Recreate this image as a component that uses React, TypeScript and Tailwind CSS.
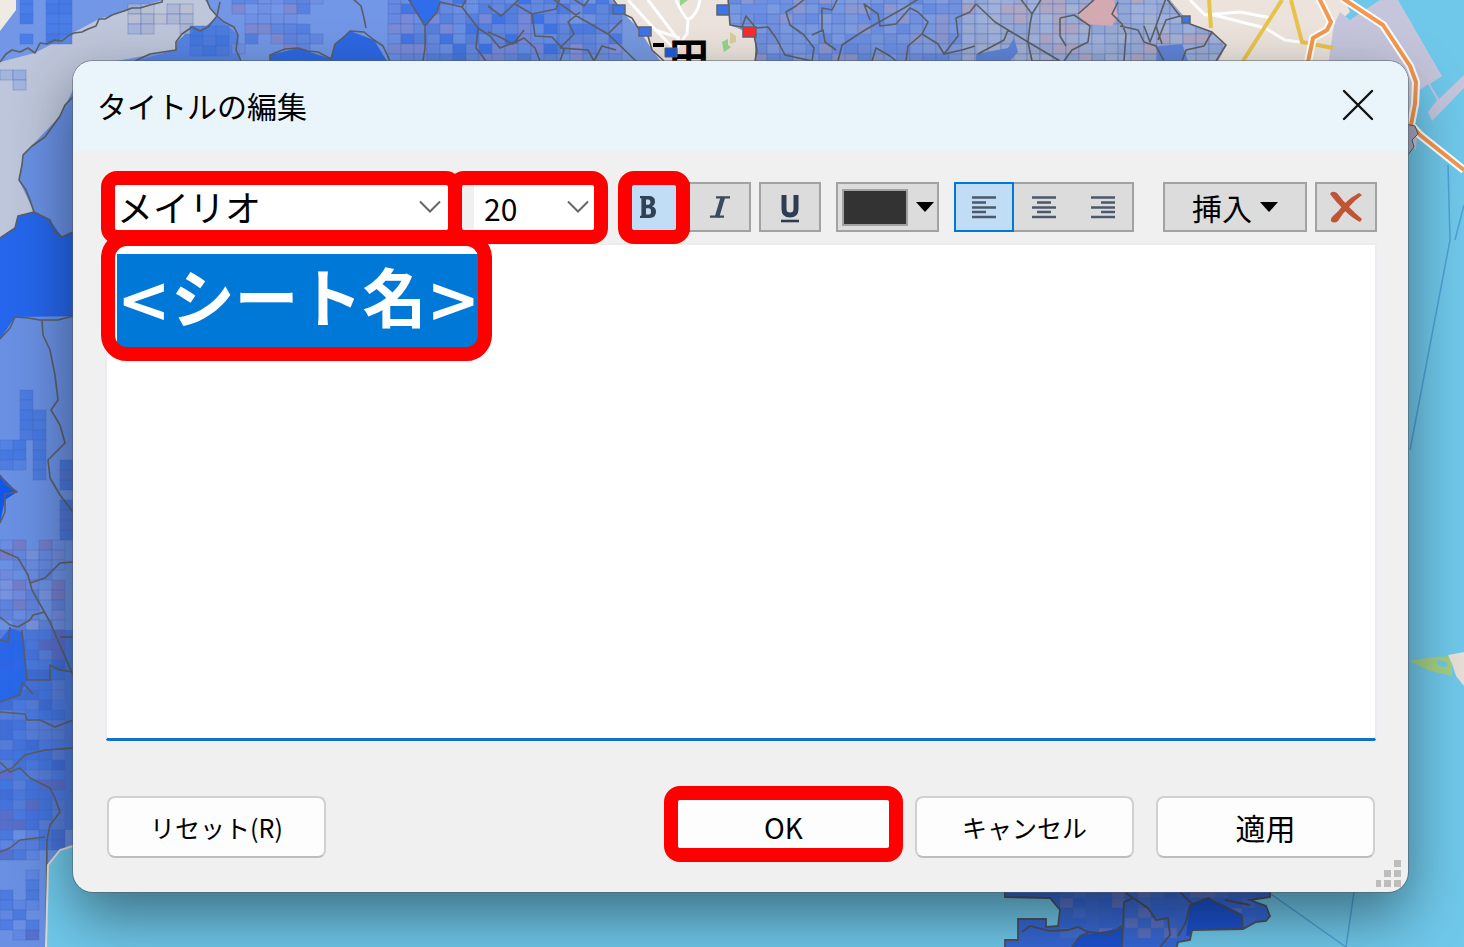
import { useEffect, useRef, useState } from "react";
import { clsx } from "clsx";

type Area = { x: number; y: number; w: number; h: number; colors: string[]; density: number };

// mesh cells laid over the districts
const CELL_W = 13;
const CELL_H = 10;

const TOP_AREAS: Area[] = [
  { x: 20, y: -6, w: 13, h: 50, colors: ["#3f78ea", "#3a72e6"], density: 0.8 },
  { x: 46, y: -6, w: 26, h: 50, colors: ["#3f78ea", "#3a72e6"], density: 0.9 },
  { x: 128, y: 4, w: 65, h: 30, colors: ["#b9bdd0", "#a9b3d2", "#9fb0dc"], density: 0.8 },
  { x: 190, y: 26, w: 40, h: 30, colors: ["#3f74e0", "#4a7be0"], density: 0.9 },
  { x: 232, y: -6, w: 91, h: 60, colors: ["#4f7be0", "#6f90e2", "#5c85e0", "#5a80de", "#7f86cc"], density: 0.75 },
  { x: 388, y: -6, w: 234, h: 70, colors: ["#5a82dc", "#7195e2", "#6c8ddd", "#4274e2", "#6a8cde", "#848fd4"], density: 0.95 },
  { x: 728, y: -6, w: 247, h: 70, colors: ["#668bde", "#7f9ce2", "#88a0dc", "#7390dc", "#7b98de", "#9298cc"], density: 0.95 },
  { x: 962, y: -6, w: 260, h: 70, colors: ["#9badd6", "#a5b1d2", "#8fa5d4", "#9aa8d0", "#b3a5bf", "#a0b2dc"], density: 0.95 },
];

const LEFT_AREAS: Area[] = [
  { x: 0, y: 60, w: 34, h: 30, colors: ["#8ea8de", "#9cb0dc"], density: 0.7 },
  { x: 20, y: 390, w: 13, h: 50, colors: ["#3d74e2", "#4677e0"], density: 1 },
  { x: 33, y: 410, w: 13, h: 70, colors: ["#3d74e2", "#4677e0"], density: 1 },
  { x: 0, y: 440, w: 34, h: 30, colors: ["#3d74e2", "#4a78e0", "#4f7fe2"], density: 0.95 },
  { x: 60, y: 460, w: 13, h: 80, colors: ["#3f70d8", "#486fd0"], density: 0.9 },
  { x: 0, y: 540, w: 73, h: 90, colors: ["#6a8ce0", "#7a94dc", "#5c7fd8", "#6386dc", "#7088da", "#7479c2"], density: 0.9 },
  { x: 0, y: 630, w: 73, h: 220, colors: ["#3f74e0", "#4a7ae0", "#567ed8", "#3c6cd6", "#4472dc", "#5a80da", "#5a6cc6"], density: 0.9 },
  { x: 0, y: 830, w: 44, h: 110, colors: ["#4a78e0", "#5c84e2", "#4674dc", "#5068c8"], density: 0.6 },
];

const ISLAND_AREAS: Area[] = [
  { x: 1060, y: 888, w: 195, h: 59, colors: ["#3d6cd6", "#4672d6", "#3568da", "#3c6ad4", "#6476c4"], density: 0.9 },
];

const BORDERS = [
  "M0 62L6 54L12 50L20 52L28 48L35 53L40 43L47 44L54 40L62 41L68 36L74 33L82 32L88 29L96 26L99 19L105 19L112 15L124 11L132 8L140 8L150 5L162 2L163-2",
  "M135 61L150 54L176 50L176 42L182 34L192 27L200 31L208 27L217 16L210 8L206-2M220 2L217 16L224 22L234 27L238 35L236 50L241 61",
  "M270 61L270 55L285 49L298 48L308 51L318 52L331 59L335 44L345 36L350 31L364 32L374 40L383 46L390 61",
  "M352-2L361 6L364 18L366 28M408-2L425 26L425 48L423 61M425 26L437 12L440 2L462 7L467-2M462 7L478 28L476 48L486 61M478 28L490 36L500 48L515 42L524 30",
  "M488 32L502 38L512 44L524 38L535 48L540 61M488 6L501 16L510 8L520-2M515 4L532 14L556 9L560-2M532 14L535 36L552 37L564 50L560 61M552-2L580 18L608 34L636 61M580 12L568 22L574 34L560 48M560 48L588 50L594 61M594 61L602 46L616 50M608 34L622 20M572-2L584 6L590-2",
  "M612-2L624 14L632 18L638 28L648 36L652 50L664 61M728-2L730 25L742 27L754 35L757 50L755 61M742 27L746 16L756 28L768 27L776 38L785 55L812 61L814 48L804 35L790 25L786 12L796 6L806-2",
  "M812 35L823 30L825 42L836 50M838-2L832 10L822 8L822 30M838 61L842 45L865 30L904 8L920-2M870 20L864 4L878 14L880 26L896 24L910 8L918 12L928 22L922 34L908 46L906 61M872 61L876 48L890 56L896 61M922 34L938 44L944 54L962 50L975 46M944 54L958 36L956 18L970 12L976 4",
  "M976 4L995 22L1008 30L1004 40L978 54M1008 30L1028 42L1032 61L1060 61M1020-2L1032 14L1042-2M1032 14L1030 24L1028 42L1060 61M1060 18L1074 15L1090 26L1088 42L1072 50L1064 61M1060 18L1060 36L1066 46M1078 14L1094 0M1118 2L1112 14L1122 24L1126 34L1124 61M1120 26L1138 30L1144 42L1156 46L1164 61M1144 26L1150 42L1156 26L1166-2M1156 26L1162 44M1166-2L1180 16L1190 24L1212 32L1226 45L1216 61M1180 16L1166 20L1158 40M1212 32L1204 46L1186 50L1182 61",
  "M73 97L65 105L60 116L45 137L32 146L23 155L22 165L19 180L26 190L30 200L34 212L50 220L55 232L62 237L73 232M0 238L15 228L18 216L34 212",
  "M0 339L10 328L15 317L28 318L40 320L58 320L73 316M42 320L43 335L50 350L55 375L58 400L51 410L60 425L65 443L48 460L50 478L60 495L73 512",
  "M0 475L6 484L17 492L5 494L5 512L0 523M0 550L18 558L28 575L32 590L50 622L73 675M30 583L45 578L60 563L73 562M60 637L73 637",
  "M0 617L10 625L18 627L30 620L33 615L45 612M10 627L8 642L0 640M22 630L24 650L27 680L50 680L50 665L60 670L73 672M0 702L20 695L22 682L33 694",
  "M0 712L25 714L27 720L40 720L55 727L73 720M0 773L12 768L25 755L45 750L73 748M0 762L10 772L20 768L30 778L50 788L55 798L60 812L50 825L47 840L46 947M0 852L10 848L20 840L45 837",
];

function cellsOf(areas: Area[]) {
  const cells: { x: number; y: number; fill: string }[] = [];
  areas.forEach((area, a) => {
    for (let y = area.y; y + CELL_H <= area.y + area.h; y += CELL_H) {
      for (let x = area.x; x + CELL_W <= area.x + area.w; x += CELL_W) {
        const seed = Math.abs(Math.sin(x * 12.9 + y * 78.2 + a * 3.7) * 43758.5);
        const rnd = seed - Math.floor(seed);
        if (rnd > area.density) continue;
        cells.push({ x, y, fill: area.colors[Math.floor(rnd * 977) % area.colors.length] });
      }
    }
  });
  return cells;
}

function Mesh({ areas }: { areas: Area[] }) {
  return (
    <g stroke="#4a6bb8" strokeOpacity={0.35}>
      {cellsOf(areas).map((c) => (
        <rect key={`${c.x}-${c.y}`} x={c.x} y={c.y} width={CELL_W} height={CELL_H} fill={c.fill} fillOpacity={0.8} />
      ))}
    </g>
  );
}

const ISLAND =
  "M1005 880H1270V897L1250 900L1266 906L1270 916L1266 921L1256 922L1243 929L1192 930L1190 940L1178 942L1176 950H1005V940H1018V919H1046V927L1058 926L1060 910L1050 898L1005 897Z";

function MapBackdrop() {
  return (
    <svg
      aria-hidden="true"
      viewBox="0 0 1464 947"
      preserveAspectRatio="xMinYMin slice"
      className="absolute inset-0 size-full"
    >
      <defs>
        <clipPath id="top-land">
          <path d="M0 0H612L625 15L638 28L652 50L664 66H0ZM728 0H1170L1190 24L1212 32L1226 45L1216 66H755V35L730 25Z" />
        </clipPath>
        <clipPath id="left-land">
          <path d="M0 0H110V846H70L60 850L48 865L46 947H0Z" />
        </clipPath>
        <clipPath id="island">
          <path d={ISLAND} />
        </clipPath>
      </defs>
      <rect width="1464" height="947" fill="#6fc8ea" />

      {/* town and harbour */}
      <path d="M600 0H1345L1350 12L1335 25V70H600Z" fill="#ebe3dc" />
      <path d="M1365 10L1380 0H1398L1442 76L1430 84L1439 99L1464 75V88L1432 121L1428 112L1437 100L1428 84L1420 90L1416 150L1400 140V66H1328L1334 25L1340 12L1350 20Z" fill="#c5c6dc" />
      <path d="M1424 90L1434 100L1426 112L1434 124L1420 134L1412 128Z" fill="#6fc8ea" />
      <g fill="none" stroke="#fff" strokeWidth="3">
        <path d="M628 0L650 24L675 50M648 0L680 42M676 0Q682 14 688 20Q698 14 700 0M688 20L687 34L675 50M655 30L680 38" />
        <path d="M1190 0L1205 15L1240 12L1272 18M1210 14L1265 28L1285 40L1300 42" />
      </g>
      <g fill="none" stroke="#e8c34c" strokeWidth="4">
        <path d="M1209 0L1211 28M1282 0L1243 61M1291 0L1302 42L1333 48" />
      </g>
      <path d="M722 42l6-3v6l3 2-7 5zM680 0h8l-8 6z" fill="#94d58e" />
      <path d="M730 32l6 4v6l-6 2z" fill="#d9cf9c" />
      <path d="M769 0h12l1 10-8 4z" fill="#9bdcae" />

      <g clipPath="url(#top-land)">
        <path d="M0 0H735V70H0Z" fill="#7297e6" />
        <path d="M388 0H475L478 66H388Z" fill="#4a7ce6" />
        <path d="M476 0H560L564 50L560 66H476Z" fill="#3d74e8" />
        <path d="M560 0H664V66H560Z" fill="#7798e0" />
        <path d="M728 0H980V66H728Z" fill="#6b8fe2" />
        <path d="M978 0H1230V66H978Z" fill="#9dafd8" />
      </g>

      <g clipPath="url(#left-land)">
        <path d="M0 60H110V947H0Z" fill="#6990e3" />
        <path d="M0 62L35 53L99 19L162 1L205 0L217 17L200 31L192 27L177 42L176 50L135 61V90H73L60 116L23 155L19 180L34 212L15 228L0 238Z" fill="#bec6db" />
        <path d="M0 238L15 228L18 216L34 212L50 220L62 237L80 230V316L15 317L0 339Z" fill="#2566ec" />
        <path d="M0 475L17 492L5 500L0 523Z" fill="#1158ea" />
        <path d="M0 630H73V830H0Z" fill="#4a7ae0" />
      </g>
      <path d="M120 61L135 61L176 50V42L192 27L200 31L217 17L238 35L241 62L135 66Z" fill="#5584e4" />
      <path d="M112 15L163 0H205L217 17L200 31L192 27L177 42L176 50L100 64L60 64Z" fill="#bec6db" />
      <path d="M0 0H16V10L0 31Z" fill="#efebe4" />

      <g clipPath="url(#top-land)">
        <Mesh areas={TOP_AREAS} />
        <path d="M270 61V55L298 48L331 59L335 44L350 31L374 40L390 66H270Z" fill="#2d68e4" />
        <path d="M408 0H440L437 12L425 26Z" fill="#2f6dec" />
        <path d="M1094 0H1114L1118 16L1112 26L1084 24L1078 14Z" fill="#d3a9b2" />
        <path d="M976 54L1008 48L1014 38L1018 52L1010 61H976ZM1158 46L1182 44L1188 61H1156Z" fill="#5f84d8" />
      </g>
      <g clipPath="url(#left-land)">
        <Mesh areas={LEFT_AREAS} />
        <path d="M0 640L10 628L22 632L27 680L20 695L0 702Z" fill="#2264ec" fillOpacity="0.8" />
      </g>
      <g fill="none" stroke="#5b5e63" strokeWidth="1.6" strokeLinejoin="round">
        {BORDERS.map((d) => (
          <path key={d} d={d} />
        ))}
      </g>
      <path d="M46 947L48 865L60 850L73 846" fill="none" stroke="#e3dcd2" strokeWidth="2" />
      <g stroke="#5b6575" strokeWidth="1.5">
        <path d="M613 5h12v9h-12zM639 27h12v9h-12zM717 5h12v10h-12zM1182 16h8v7h-8z" fill="#3d74e8" />
        <path d="M743 27h13v10h-13z" fill="#ff2a2a" />
      </g>
      <path d="M653 43H664V47H653Z" fill="#000" />
      <text x="669" y="72" fontSize="40" fontWeight="700" fontFamily="'Noto Sans CJK JP', sans-serif">
        田
      </text>
      <path d="M665 48h12v9h-12z" fill="#1f5ce0" stroke="#5b6575" />

      {/* coastal motorway */}
      <g fill="none" strokeLinejoin="round">
        <path d="M1318-4L1331 22L1327 30L1313 38L1308 62M1342-2L1383 25L1410 66L1416 82L1415 104L1411 125L1420 135L1464 170" stroke="#fff" strokeWidth="8" />
        <path d="M1318-4L1331 22L1327 30L1313 38L1308 62M1342-2L1383 25L1410 66L1416 82L1415 104L1411 125L1420 135L1464 170" stroke="#f39850" strokeWidth="4" />
      </g>
      <path d="M1405 124L1415 126L1418 134L1412 140L1414 147L1407 156Z" fill="#a8a9be" stroke="#5b5e63" />
      <path d="M1448 165L1450 240L1410 450M1455 240L1464 205M1354 892L1346 947M1268 892L1346 947" fill="none" stroke="#4f9fd6" strokeWidth="1.5" />
      <path d="M1409 661L1432 657L1452 656V676L1430 671Z" fill="#a3cf84" />
      <path d="M1438 660l8 2 2 4-5 1-6-3z" fill="#6fc8ea" />
      <path d="M1448 655L1464 652V686L1456 676L1452 664Z" fill="#e8dfd8" />

      <path d={ISLAND} fill="#3568d6" />
      <g clipPath="url(#island)">
        <Mesh areas={ISLAND_AREAS} />
        <path d="M1190 905L1206 898L1222 904L1242 914L1243 929L1186 936ZM1072 947L1080 936L1122 928V947Z" fill="#1c52d0" />
      </g>
      <g fill="none" stroke="#4d515c" strokeWidth="1.8">
        <path d={ISLAND} />
        <path d="M1125 892L1133 898L1124 902L1123 925L1122 947M1133 898L1148 908L1156 920L1168 918L1170 935L1160 947M1190 905L1208 898L1222 906L1242 916L1243 929M1190 905L1186 922L1178 936M1022 932L1030 926L1050 931L1068 930L1078 927L1088 932L1110 934L1122 926M1072 947L1080 936L1088 933M1180 892L1192 904M1225 900L1250 905" />
      </g>
    </svg>
  );
}

function Marker({ className }: { className: string }) {
  return (
    <span
      aria-hidden="true"
      className={clsx("pointer-events-none absolute z-10 border-[14px] border-[#ff0000]", className)}
    />
  );
}

function Chevron() {
  return (
    <svg viewBox="0 0 24 14" className="pointer-events-none absolute top-[18px] right-2 h-[14px] w-6" fill="none" stroke="#666" strokeWidth="2">
      <path d="M2 1.5L12 11.5L22 1.5" />
    </svg>
  );
}

function Caret() {
  return (
    <svg viewBox="0 0 18 10" className="h-[10px] w-[18px]">
      <path d="M0 0H18L9 10Z" />
    </svg>
  );
}

const ALIGN_LINES = {
  left: "M0 1.5H24M0 6.5H14M0 11.5H24M0 16H14M0 21H24",
  center: "M0 1.5H24M5 6.5H19M0 11.5H24M5 16H19M0 21H24",
  right: "M0 1.5H24M10 6.5H24M0 11.5H24M10 16H24M0 21H24",
};

type Align = keyof typeof ALIGN_LINES;

const ALIGNS: { value: Align; label: string }[] = [
  { value: "left", label: "左揃え" },
  { value: "center", label: "中央揃え" },
  { value: "right", label: "右揃え" },
];

const TOOL = "flex h-[50px] items-center justify-center border-2 border-[#a2a2a2] bg-[#dcdcdc]";
const ACTION =
  "h-[62px] w-[219px] rounded-lg border-2 border-[#d0d0d0] border-b-[#bdbdbd] bg-[#fdfdfd] leading-8 text-black";

export default function App() {
  const [align, setAlign] = useState<Align>("left");
  const [bold, setBold] = useState(true);
  const editor = useRef<HTMLTextAreaElement>(null);

  useEffect(() => {
    editor.current?.focus();
    editor.current?.select();
  }, []);

  return (
    <main className="relative flex min-h-screen overflow-hidden pt-[61px] pr-14 pb-[55px] pl-[73px] font-['Noto_Sans_CJK_JP',sans-serif] text-black">
      <MapBackdrop />
      <section
        role="dialog"
        aria-labelledby="dialog-title"
        className="relative flex min-w-0 flex-1 flex-col rounded-[20px] bg-[#f0f0f0] shadow-[0_0_0_1px_rgba(80,90,100,0.5),0_24px_60px_rgba(0,0,0,0.45)]"
      >
        <header className="flex h-[90px] items-center justify-between rounded-t-[20px] bg-[#e9f5fb] pr-[34px] pb-[2px] pl-6">
          <h1 id="dialog-title" className="text-[30px] leading-10">タイトルの編集</h1>
          <button type="button" aria-label="閉じる">
            <svg viewBox="0 0 32 32" className="size-8" fill="none" stroke="#111" strokeWidth="2.4" strokeLinecap="round">
              <path d="M2 2L30 30M30 2L2 30" />
            </svg>
          </button>
        </header>

        <div className="flex flex-1 flex-col pr-[31px] pl-8">
          <div className="flex pt-[31px] pb-[11px]">
            <div className="relative w-[345px]">
              <select
                aria-label="フォント"
                className="h-[50px] w-full appearance-none border-b-2 border-[#8a8a8a] bg-white pl-3 text-4xl leading-10 outline-none"
              >
                <option>メイリオ</option>
              </select>
              <Chevron />
              <Marker className="-top-[11px] -right-3 -bottom-3 -left-1 rounded-2xl" />
            </div>
            <div className="relative ml-6 w-[124px]">
              <select
                aria-label="サイズ"
                className="h-[50px] w-full appearance-none border-b-2 border-[#8a8a8a] bg-white pt-1 pl-[10px] text-[30px] leading-10 outline-none"
              >
                <option>20</option>
              </select>
              <Chevron />
              <Marker className="-top-[11px] -right-[10px] -bottom-3 -left-[26px] rounded-2xl" />
            </div>

            <div className="relative ml-8">
              <button
                type="button"
                aria-label="太字"
                aria-pressed={bold}
                onClick={() => setBold(!bold)}
                className={clsx("flex h-[50px] w-[60px] items-center border-2 pl-2", bold ? "border-[#0078d7] bg-[#c0ddf5]" : "border-[#a2a2a2] bg-[#dcdcdc]")}
              >
                <svg viewBox="0 0 16 22" className="h-[22px] w-4" fill="#334155" fillRule="evenodd">
                  <path d="M0 0H9Q15 0 15 5.5Q15 9 12 10.2Q16 11.4 16 15.8Q16 22 9.4 22H0V20L1.4 19.4V2.6L0 2ZM6 3.4V8.8H8.2Q10.4 8.8 10.4 6T8.2 3.4ZM6 12.2V18.6H8.6Q11 18.6 11 15.4T8.6 12.2Z" />
                </svg>
              </button>
              <Marker className="-top-[11px] right-0 -bottom-3 -left-3 rounded-2xl" />
            </div>
            <button type="button" aria-label="斜体" className={clsx(TOOL, "w-[61px] border-l-0")}>
              <svg viewBox="0 0 20 22" className="h-[22px] w-5" fill="none" stroke="#3d495c">
                <path d="M13 1L7 21" strokeWidth="4.4" />
                <path d="M6 1.3H20M0 20.7H14" strokeWidth="2.2" />
              </svg>
            </button>
            <button type="button" aria-label="下線" className={clsx(TOOL, "ml-2 w-[62px] pt-1")}>
              <svg viewBox="0 0 18 28" className="h-7 w-[18px]" fill="none" stroke="#2f3d52">
                <path d="M3 0V14Q3 20 9 20T15 14V0" strokeWidth="5" />
                <path d="M0 26H18" strokeWidth="2.6" />
              </svg>
            </button>

            <button type="button" aria-label="文字色" className={clsx(TOOL, "ml-[15px] w-[103px] gap-2")}>
              <span className="h-[37px] w-[66px] border-2 border-[#a2a2a2] bg-[#333]" />
              <Caret />
            </button>

            <div role="group" aria-label="配置" className="ml-[15px] flex">
              {ALIGNS.map(({ value, label }, i) => (
                <button
                  key={value}
                  type="button"
                  aria-label={label}
                  aria-pressed={align === value}
                  onClick={() => setAlign(value)}
                  className={clsx(
                    "flex h-[50px] w-[60px] items-center justify-center border-y-2",
                    align === value ? "border-x-2 border-[#0078d7] bg-[#c0ddf5]" : "border-[#a2a2a2] bg-[#dcdcdc]",
                    align !== value && i === 0 && "border-l-2",
                    align !== value && i === 2 && "border-r-2",
                  )}
                >
                  <svg viewBox="0 0 24 23" className="h-[23px] w-6" stroke="#4c586c" strokeWidth="2.4">
                    <path d={ALIGN_LINES[value]} />
                  </svg>
                </button>
              ))}
            </div>

            <button type="button" className={clsx(TOOL, "ml-auto w-36 gap-2 text-[30px] leading-10")}>
              挿入
              <Caret />
            </button>
            <button type="button" aria-label="クリア" className={clsx(TOOL, "ml-2 w-[62px]")}>
              <svg viewBox="0 0 32 32" className="size-8" fill="#bf5535">
                <path d="M0 3Q2-1 7 2Q13 10 20 17Q26 23 32 28L30 31Q22 27 14 19Q6 11 0 3Z" />
                <path d="M29 2L32 4Q25 9 19 16Q12 23 8 30Q4 33 1 30Q0 28 3 25Q9 20 14 13Q21 6 29 2Z" />
              </svg>
            </button>
          </div>

          <div className="relative flex flex-1">
            <textarea
              ref={editor}
              aria-label="タイトル"
              spellCheck={false}
              defaultValue="<シート名>"
              className={clsx(
                "min-w-0 flex-1 resize-none rounded-b-sm border-x-2 border-t-2 border-b-[3px] border-x-[#e9edf2] border-t-[#ececec] border-b-[#1272c8] bg-white pt-[9px] pl-[10px] font-['DejaVu_Sans','Noto_Sans_CJK_JP',sans-serif] text-[64px] leading-[93px] text-black outline-none selection:bg-[#0078d7] selection:text-white",
                bold && "font-bold",
                align === "center" && "text-center",
                align === "right" && "text-right",
              )}
            />
            <Marker className="-top-[11px] -left-1 h-[129px] w-[391px] rounded-[26px]" />
          </div>

          <footer className="flex gap-[22px] pt-[55px] pr-[2px] pb-[34px] pl-[2px]">
            <button type="button" className={clsx(ACTION, "mr-auto text-[25px]")}>リセット(R)</button>
            <div className="relative">
              <button type="button" className={clsx(ACTION, "text-[28px]")}>OK</button>
              <Marker className="-top-[10px] -right-[10px] -bottom-1 -left-[10px] rounded-2xl" />
            </div>
            <button type="button" className={clsx(ACTION, "text-[25px]")}>キャンセル</button>
            <button type="button" className={clsx(ACTION, "text-[30px]")}>適用</button>
          </footer>
        </div>

        <svg viewBox="0 0 26 28" aria-hidden="true" className="absolute right-[6px] bottom-1 h-7 w-[26px]" fill="#bdbdbd">
          <path d="M18 0h7v7h-7zM8 10h7v7H8zM18 10h7v7h-7zM0 20h5v7H0zM8 20h7v7H8zM18 20h7v7h-7z" />
        </svg>
      </section>
    </main>
  );
}
